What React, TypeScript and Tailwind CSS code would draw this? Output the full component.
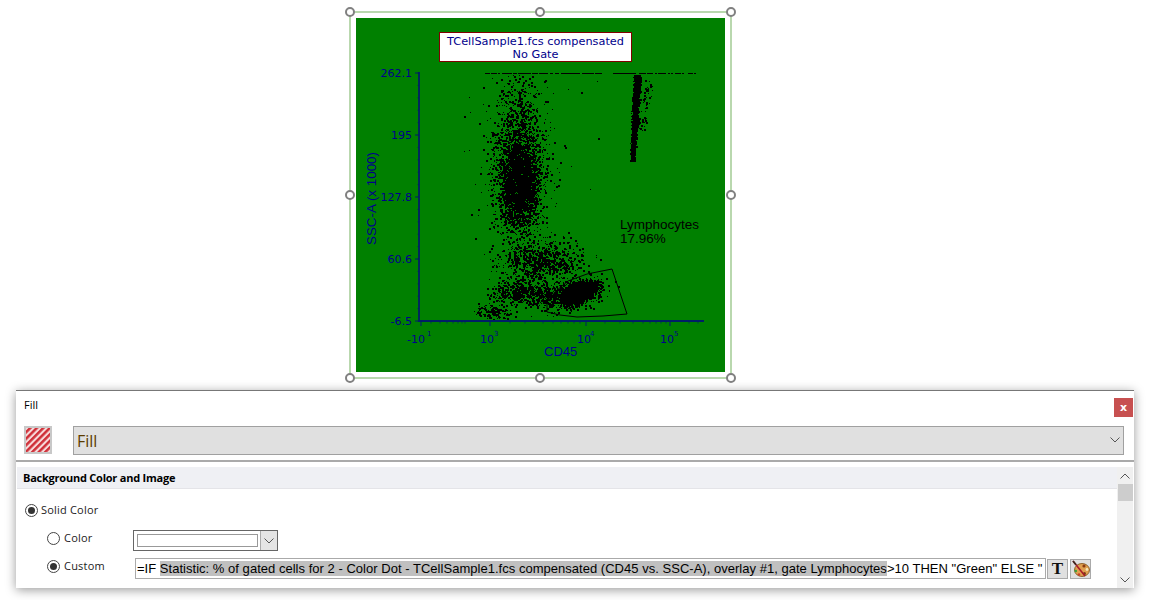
import React from "react";

function mulberry(seed: number) {
  return () => {
    seed |= 0; seed = (seed + 0x6d2b79f5) | 0;
    let t = Math.imul(seed ^ (seed >>> 15), 1 | seed);
    t = (t + Math.imul(t ^ (t >>> 7), 61 | t)) ^ t;
    return ((t ^ (t >>> 14)) >>> 0) / 4294967296;
  };
}

function buildDots(): [number, number, number][] {
  const r = mulberry(7);
  const g = () => {
    const u = Math.max(r(), 1e-6), v = r();
    return Math.sqrt(-2 * Math.log(u)) * Math.cos(2 * Math.PI * v);
  };
  const out: [number, number, number][] = [];
  const add = (x: number, y: number) => {
    if (y < 74.5 || y > 319.5 || x < 421) return;
    out.push([Math.round(x), Math.round(y), r() < 0.45 ? 2 : 1]);
  };
  const cluster = (n: number, cx: number, cy: number, sx: number, sy: number, rot = 0) => {
    for (let i = 0; i < n; i++) {
      const a = g() * sx, b = g() * sy;
      add(cx + a * Math.cos(rot) - b * Math.sin(rot), cy + a * Math.sin(rot) + b * Math.cos(rot));
    }
  };
  cluster(2200, 519, 185, 9, 22);
  cluster(1100, 519, 150, 12, 40);
  cluster(800, 519, 175, 15, 28);
  cluster(70, 522, 120, 24, 42);
  cluster(850, 541, 261, 19, 10);
  cluster(420, 518, 292, 14, 6);
  cluster(130, 492, 311, 9, 4.5);
  cluster(250, 547, 294, 12, 6);
  cluster(2400, 579, 292, 8.5, 4.2, -0.35);
  cluster(500, 572, 295, 15, 6.5, -0.3);
  // narrow stripe
  for (let i = 0; i < 1500; i++) {
    const t = Math.pow(r(), 1.1);
    add(637 - 5 * t + (r() - 0.5) * (5.5 - 3.5 * t * t) + g() * 0.6, 74 + 86 * t);
  }
  // wedge beside it
  for (let i = 0; i < 60; i++) {
    const t = r();
    add(651 - 11 * t + g() * 2.5, 80 + 50 * t);
  }
  for (let i = 0; i < 25; i++) add(470 + r() * 130, 80 + r() * 230);
  return out;
}

function buildEdge(): [number, number][] {
  const r = mulberry(21);
  const out: [number, number][] = [];
  for (let i = 0; i < 170; i++) {
    const x = 484 + r() * 212;
    if (r() < (x > 600 && x < 613 ? 0.1 : 1)) out.push([Math.round(x), 73]);
  }
  return out;
}

const dotPath = buildDots().map(([x, y, s]) => `M${x} ${y}h${s}v${s}h-${s}z`).join("");
const edgePath = buildEdge().map(([x, y]) => `M${x} ${y}h2v1h-2z`).join("");

const yLabels: [string, number][] = [["262.1", 73], ["195", 135], ["127.8", 197], ["60.6", 259], ["-6.5", 321]];
const yMinor = Array.from({ length: 21 }, (_, i) => 73 + i * 12.4);
const xMajor = [421, 490, 586, 670];
const xMinor = [431, 440, 447, 453, 458, 462, 465, 510, 525, 543, 553, 561, 568, 574, 580, 605, 620, 633, 643, 650, 656, 661, 666, 689, 698];
const axis = "#001f66";
const lab = "#00008b";

function Plot() {
  return (
    <svg viewBox="356 18 369 354" className="block w-[369px] h-[354px]">
      <path d={dotPath} fill="#000" shapeRendering="crispEdges" />
      <path d={edgePath} fill="#000" shapeRendering="crispEdges" />
      <polyline
        points="547,302 556,291 568,281 587,274 612,269 627,314 603,316 577,317 560,315 547,312 547,302"
        fill="none" stroke="#000" strokeWidth="1"
      />
      <line x1="419" y1="72" x2="419" y2="322" stroke={axis} strokeWidth="1.8" />
      <line x1="419" y1="321" x2="704" y2="321" stroke={axis} strokeWidth="1.8" />
      {yLabels.map(([t, y]) => (
        <g key={t}>
          <line x1="415" x2="419" y1={y} y2={y} stroke={axis} />
          <text x="412" y={y + 4} textAnchor="end" fontSize="11" fill={lab} fontFamily="'DejaVu Sans',sans-serif">{t}</text>
        </g>
      ))}
      {yMinor.map((y) => <line key={y} x1="417.5" x2="419" y1={y} y2={y} stroke={axis} strokeWidth="0.7" />)}
      {xMajor.map((x) => <line key={x} x1={x} x2={x} y1="321" y2="326" stroke={axis} />)}
      {xMinor.map((x) => <line key={x} x1={x} x2={x} y1="321" y2="323.5" stroke={axis} strokeWidth="0.7" />)}
      <g fontFamily="'DejaVu Sans',sans-serif" fill={lab}>
        <text x="407" y="343" fontSize="11">-10</text><text x="427" y="336" fontSize="7">1</text>
        <text x="480" y="343" fontSize="11">10</text><text x="494" y="336" fontSize="7">3</text>
        <text x="577" y="343" fontSize="11">10</text><text x="590" y="336" fontSize="7">4</text>
        <text x="660" y="343" fontSize="11">10</text><text x="674" y="336" fontSize="7">5</text>
      </g>
      <text x="544" y="356" fontSize="13" fill={lab} fontFamily="'Liberation Sans',sans-serif">CD45</text>
      <text transform="translate(376 245) rotate(-90)" fontSize="13.4" fill={lab} fontFamily="'Liberation Sans',sans-serif">SSC-A (x 1000)</text>
      <text fontSize="13.5" fill="#000" fontFamily="'Liberation Sans',sans-serif">
        <tspan x="620" y="229">Lymphocytes</tspan>
        <tspan x="620" y="243">17.96%</tspan>
      </text>
    </svg>
  );
}

function Handle({ className }: { className: string }) {
  return <div className={`absolute w-[10px] h-[10px] rounded-full border-2 border-[#808080] bg-white ${className}`} />;
}

function Chevron({ className = "" }: { className?: string }) {
  return (
    <svg viewBox="0 0 10 6" className={`w-[10px] h-[6px] ${className}`} fill="none" stroke="#555" strokeWidth="1">
      <path d="M0.5 0.5L5 5L9.5 0.5" />
    </svg>
  );
}

function Radio({ checked }: { checked: boolean }) {
  return (
    <span className="flex items-center justify-center w-[13px] h-[13px] rounded-full border border-[#444] bg-white shrink-0">
      {checked && <span className="block w-[7px] h-[7px] rounded-full bg-[#333]" />}
    </span>
  );
}

function FillIcon() {
  return (
    <svg viewBox="0 0 28 28" className="w-[28px] h-[28px] block">
      <defs>
        <pattern id="st" width="4.6" height="4.6" patternUnits="userSpaceOnUse" patternTransform="rotate(45)">
          <rect width="4.6" height="4.6" fill="#f7dcdc" />
          <rect width="2.5" height="4.6" fill="#cf2f38" />
        </pattern>
      </defs>
      <rect width="28" height="28" fill="#c8c8c8" />
      <rect x="2" y="2" width="24" height="24" fill="url(#st)" />
    </svg>
  );
}

function Palette() {
  return (
    <svg viewBox="0 0 18 18" className="w-[18px] h-[18px]">
      <ellipse cx="10" cy="10" rx="7.5" ry="6.5" fill="#e0a050" stroke="#7a4a12" strokeWidth="0.8" />
      <circle cx="12" cy="6" r="1.6" fill="#8a3b12" />
      <circle cx="15" cy="9.5" r="1.4" fill="#f6e6b8" />
      <circle cx="12.5" cy="13.5" r="1.5" fill="#7a3d15" />
      <circle cx="7" cy="14.5" r="1.2" fill="#c8402c" />
      <circle cx="3.8" cy="11" r="1.3" fill="#3aa23a" />
      <path d="M1 1L13 16" stroke="#a81c28" strokeWidth="1.6" />
      <path d="M1 1L4 4.8" stroke="#3a2a20" strokeWidth="1.6" />
    </svg>
  );
}

export default function App() {
  return (
    <div className="w-[1153px] h-[600px] bg-white overflow-hidden font-['Open_Sans',sans-serif] text-black">
      <div className="h-[390px] pt-[12px] pl-[350px]">
        <div className="relative w-[383px] h-[368px] border-2 border-[#b9d8ae] pt-[5px] pl-[5px] -ml-[1px] -mt-[1px]">
          <div className="relative w-[369px] h-[354px] bg-[#008000]">
            <Plot />
            <div className="absolute left-[83px] top-[14px] w-[193px] h-[30px] bg-white border border-[#800000] text-center text-[11.3px] leading-[13px] pt-[2px] text-[#00008b] font-['DejaVu_Sans',sans-serif]">
              <div>TCellSample1.fcs compensated</div>
              <div>No Gate</div>
            </div>
          </div>
          <Handle className="-left-[6px] -top-[6px]" />
          <Handle className="left-[184px] -top-[6px]" />
          <Handle className="-right-[6px] -top-[6px]" />
          <Handle className="-left-[6px] top-[177px]" />
          <Handle className="-right-[6px] top-[177px]" />
          <Handle className="-left-[6px] -bottom-[6px]" />
          <Handle className="left-[184px] -bottom-[6px]" />
          <Handle className="-right-[6px] -bottom-[6px]" />
        </div>
      </div>

      <div className="ml-[16px] w-[1118px] h-[198px] bg-white border-t border-[#777] shadow-[0_2px_10px_rgba(0,0,0,0.4)] flex flex-col">
        <div className="flex justify-between pl-[8px] pr-[1px] pt-[6px] h-[34px]">
          <span className="text-[11px] leading-[16px]">Fill</span>
          <button className="mt-[1px] w-[19px] h-[19px] bg-[#c75050] text-white text-[11px] font-bold leading-[17px] text-center font-['DejaVu_Sans',sans-serif]">x</button>
        </div>
        <div className="flex items-center pl-[8px] pr-[10px] gap-[21px] h-[30px]">
          <FillIcon />
          <div className="flex-1 h-[29px] bg-[#e0e0e0] border border-[#a0a0a0] flex items-center justify-between pl-[3px] pr-[3px]">
            <span className="text-[16px] pt-[1px] text-[#5c3c00] font-['Open_Sans',sans-serif]">Fill</span>
            <Chevron />
          </div>
        </div>
        <div className="mt-[5px] border-t-2 border-[#aaa] flex-1 flex pt-[5px] pl-[1px] pr-[1px] min-h-0">
          <div className="flex-1 flex flex-col min-w-0">
            <div className="h-[22px] bg-[#eff0f4] border-b border-[#e4e4e8] pl-[6px] text-[11px] font-bold leading-[21px] tracking-[-0.23px]">Background Color and Image</div>
            <div className="flex items-center gap-[3px] pl-[8px] mt-[15px] h-[13px] text-[11px] text-[#222] tracking-[0.2px]">
              <Radio checked /><span>Solid Color</span>
            </div>
            <div className="flex items-center pl-[30px] mt-[13px] h-[21px] text-[11px] text-[#222] tracking-[0.2px]">
              <div className="flex items-center gap-[4px] w-[86px] -mt-[4px]"><Radio checked={false} /><span>Color</span></div>
              <div className="w-[145px] h-[21px] border border-[#666] flex items-center bg-white">
                <div className="ml-[3px] w-[121px] h-[13px] border border-[#999]" />
                <div className="ml-[2px] flex-1 h-full bg-[#e4e4e4] border-l border-[#aaa] flex items-center justify-center"><Chevron /></div>
              </div>
            </div>
            <div className="flex items-center pl-[30px] mt-[7px] h-[21px] text-[11px] text-[#222] tracking-[0.2px]">
              <div className="flex items-center gap-[4px] w-[88px] -mt-[4px]"><Radio checked /><span>Custom</span></div>
              <div className="w-[911px] h-[21px] border border-[#aaa] pl-[1px] text-[13px] leading-[19px] tracking-[0.025px] whitespace-nowrap overflow-hidden font-['Liberation_Sans',sans-serif] text-black">
                =IF <span className="bg-[#c0c0c0]">Statistic: % of gated cells for 2 - Color Dot - TCellSample1.fcs compensated (CD45 vs. SSC-A), overlay #1, gate Lymphocytes</span>&gt;10 THEN "Green" ELSE "
              </div>
              <button className="ml-[1px] w-[21px] h-[20px] bg-[#e0e0e0] border border-[#aaa] flex items-center justify-center font-['Liberation_Serif',serif] font-bold text-[17px] leading-none text-[#111]">T</button>
              <button className="ml-[2px] w-[21px] h-[20px] bg-[#e0e0e0] border border-[#aaa] flex items-center justify-center"><Palette /></button>
            </div>
          </div>
          <div className="w-[16px] bg-[#f0f0f0] flex flex-col items-center">
            <div className="h-[17px] w-full flex items-center justify-center"><Chevron className="rotate-180" /></div>
            <div className="h-[17px] w-[15px] bg-[#cdcdcd]" />
            <div className="flex-1" />
            <div className="h-[17px] w-full flex items-center justify-center"><Chevron /></div>
          </div>
        </div>
      </div>
    </div>
  );
}
